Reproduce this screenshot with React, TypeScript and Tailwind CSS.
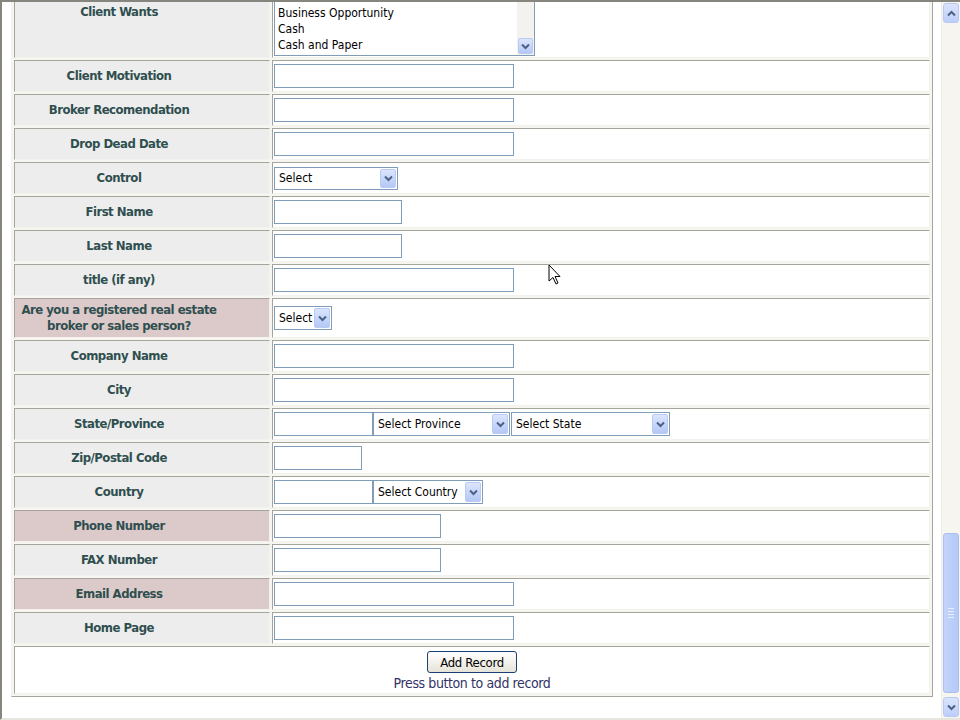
import React from "react";

const labelFont = {
  fontFamily: '"DejaVu Sans Condensed", "Liberation Sans", sans-serif',
};
const fieldFont = {
  fontFamily: '"DejaVu Sans Condensed", "DejaVu Sans", sans-serif',
};

const Chevron = ({ up = false }: { up?: boolean }) => (
  <svg width="9" height="7" viewBox="0 0 9 7">
    <path
      d={up ? "M1 5.5 L4.5 2 L8 5.5" : "M1 1.5 L4.5 5 L8 1.5"}
      fill="none"
      stroke="#4d6185"
      strokeWidth="2"
    />
  </svg>
);

const DropArrow = () => (
  <div className="flex h-full w-[16px] shrink-0 items-center justify-center rounded-[2px] border border-[#b9cbf3] bg-gradient-to-b from-[#dbe5fd] to-[#b4c8f6]">
    <Chevron />
  </div>
);

const TextBox = ({ w }: { w: string }) => (
  <input
    readOnly
    className={`${w} h-[24px] shrink-0 border border-[#7f9db9] bg-white`}
  />
);

const SelectBox = ({ w, h = "h-[24px]", text }: { w: string; h?: string; text: string }) => (
  <div
    className={`${w} ${h} flex shrink-0 items-center border border-[#7f9db9] bg-white p-[1px] text-[12px] text-black`}
    style={fieldFont}
  >
    <span className="flex-1 truncate pl-[3px]">{text}</span>
    <DropArrow />
  </div>
);

interface RowProps {
  label: React.ReactNode;
  pink?: boolean;
  h?: string;
  top?: boolean;
  children: React.ReactNode;
}

const Row = ({ label, pink, h = "h-[32px]", top, children }: RowProps) => (
  <div className="flex gap-[2px]">
    <div
      className={`${h} flex w-[256px] shrink-0 justify-center border border-t-[#a5a59e] border-l-[#a5a59e] border-r-[#f2f2ee] border-b-[#f2f2ee] pr-[46px] text-center text-[13px] font-bold leading-[16px] tracking-[-0.5px] text-[#2f4f4f] ${
        top ? "items-start pt-[17px]" : "items-center"
      } ${pink ? "bg-[#dccaca]" : "bg-[#ededed]"}`}
      style={labelFont}
    >
      {label}
    </div>
    <div
      className={`${h} flex flex-1 items-center border border-t-[#a5a59e] border-l-[#a5a59e] border-r-[#f2f2ee] border-b-[#f2f2ee] bg-white pl-[1px]`}
    >
      {children}
    </div>
  </div>
);

const ListBox = () => (
  <div className="mt-[2px] flex h-[66px] w-[261px] border border-[#7f9db9] bg-white" style={fieldFont}>
    <div className="flex flex-1 flex-col justify-end pb-[2px] pl-[3px] text-[12px] leading-[16px] text-black">
      <div>Business Opportunity</div>
      <div>Cash</div>
      <div>Cash and Paper</div>
    </div>
    <div className="flex w-[17px] flex-col justify-end bg-[#f3f2ee] p-[1px]">
      <div className="flex h-[16px] items-center justify-center rounded-[2px] border border-[#b9cbf3] bg-gradient-to-b from-[#dbe5fd] to-[#b4c8f6]">
        <Chevron />
      </div>
    </div>
  </div>
);

const Scrollbar = () => (
  <div className="flex w-[19px] shrink-0 flex-col border-l border-[#eeede6] bg-[#f6f5f0] px-[1px] pt-[1px]">
    <div className="flex h-[20px] items-center justify-center rounded-[3px] border border-[#b7c9f2] bg-gradient-to-b from-[#dae4fd] to-[#bccff9]">
      <Chevron up />
    </div>
    <div className="h-[510px]" />
    <div className="flex h-[160px] flex-col items-center justify-center gap-[2px] rounded-[3px] border border-[#a9bff2] bg-gradient-to-r from-[#c4d5fb] to-[#b3c9f7]">
      <div className="h-px w-[6px] bg-[#e8efff]" />
      <div className="h-px w-[6px] bg-[#e8efff]" />
      <div className="h-px w-[6px] bg-[#e8efff]" />
      <div className="h-px w-[6px] bg-[#e8efff]" />
    </div>
    <div className="h-[4px]" />
    <div className="flex h-[20px] items-center justify-center rounded-[3px] border border-[#b7c9f2] bg-gradient-to-b from-[#dae4fd] to-[#bccff9]">
      <Chevron />
    </div>
  </div>
);

export default function App() {
  return (
    <div className="relative flex h-[720px] w-[960px] overflow-hidden border-t-2 border-l-2 border-b-2 border-t-[#86867e] border-l-[#86867e] border-b-[#e6e5de] bg-white">
      <div className="min-w-0 flex-1 overflow-hidden pl-[9px]">
        <div className="-mt-[19px] flex w-[922px] flex-col gap-[2px] border border-t-[#f3f2ec] border-l-[#f3f2ec] border-r-[#a5a59e] border-b-[#a5a59e] bg-[#f6f5f0] p-[2px]">
          <Row label="Client Wants" h="h-[72px]" top>
            <ListBox />
          </Row>
          <Row label="Client Motivation">
            <TextBox w="w-[240px]" />
          </Row>
          <Row label="Broker Recomendation">
            <TextBox w="w-[240px]" />
          </Row>
          <Row label="Drop Dead Date">
            <TextBox w="w-[240px]" />
          </Row>
          <Row label="Control">
            <SelectBox w="w-[124px]" h="h-[23px]" text="Select" />
          </Row>
          <Row label="First Name">
            <TextBox w="w-[128px]" />
          </Row>
          <Row label="Last Name">
            <TextBox w="w-[128px]" />
          </Row>
          <Row label="title (if any)">
            <TextBox w="w-[240px]" />
          </Row>
          <Row
            label={
              <span>
                Are you a registered real estate
                <br />
                broker or sales person?
              </span>
            }
            pink
            h="h-[40px]"
          >
            <SelectBox w="w-[58px]" text="Select" />
          </Row>
          <Row label="Company Name">
            <TextBox w="w-[240px]" />
          </Row>
          <Row label="City">
            <TextBox w="w-[240px]" />
          </Row>
          <Row label="State/Province">
            <TextBox w="w-[99px]" />
            <SelectBox w="w-[137px]" text="Select Province" />
            <div className="w-[1px]" />
            <SelectBox w="w-[159px]" text="Select State" />
          </Row>
          <Row label="Zip/Postal Code">
            <TextBox w="w-[88px]" />
          </Row>
          <Row label="Country">
            <TextBox w="w-[99px]" />
            <SelectBox w="w-[110px]" text="Select Country" />
          </Row>
          <Row label="Phone Number" pink>
            <TextBox w="w-[167px]" />
          </Row>
          <Row label="FAX Number">
            <TextBox w="w-[167px]" />
          </Row>
          <Row label="Email Address" pink>
            <TextBox w="w-[240px]" />
          </Row>
          <Row label="Home Page">
            <TextBox w="w-[240px]" />
          </Row>
          <div
            className="flex h-[48px] flex-col items-center border border-t-[#a5a59e] border-l-[#a5a59e] border-r-[#f2f2ee] border-b-[#f2f2ee] bg-white pt-[4px]"
            style={labelFont}
          >
            <button className="h-[22px] w-[90px] rounded-[3px] border border-[#1c3f74] bg-gradient-to-b from-white to-[#e6e4d8] text-[13px] leading-none tracking-[-0.3px] text-black">
              Add Record
            </button>
            <div className="text-[14px] leading-[20px] tracking-[-0.4px] text-[#333366]">Press button to add record</div>
          </div>
        </div>
      </div>
      <Scrollbar />
      <svg
        className="absolute left-[546px] top-[262px]"
        width="13"
        height="22"
        viewBox="0 0 13 22"
      >
        <path
          d="M1 1 L1 17 L5 13.5 L8 20 L10 19 L7 12.5 L12 12.5 Z"
          fill="#fff"
          stroke="#000"
          strokeWidth="1"
          strokeLinejoin="round"
        />
      </svg>
    </div>
  );
}
